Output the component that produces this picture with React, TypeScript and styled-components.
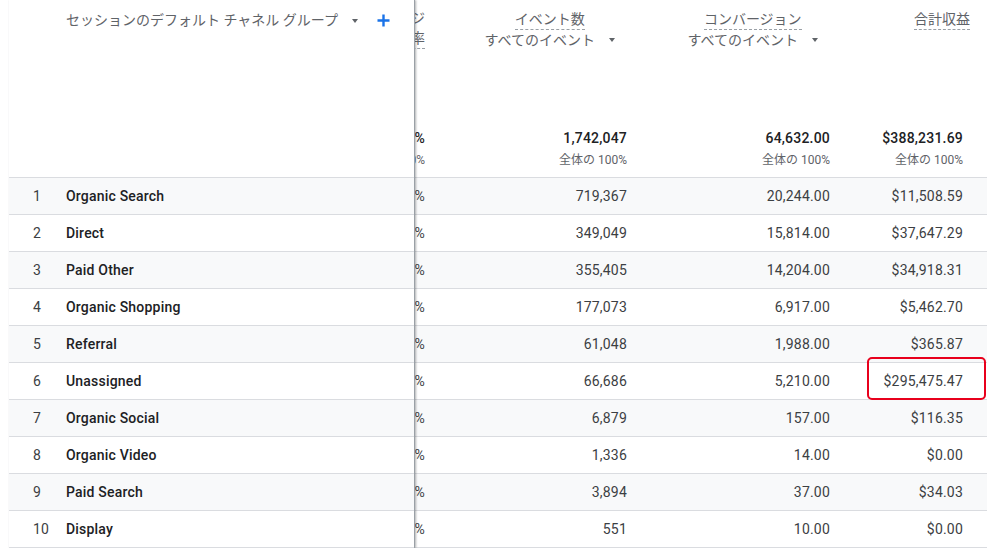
import styled, { createGlobalStyle } from "styled-components";

const GlobalStyle = createGlobalStyle`
  body {
    margin: 0;
    background: #fff;
    font-family: Roboto, "Noto Sans CJK JP", sans-serif;
    color: #202124;
  }
`;

const Page = styled.div`
  padding-left: 9px;
`;

const Table = styled.div`
  display: flex;
  width: 978px;
`;

const FixedPanel = styled.div`
  width: 406px;
  box-sizing: border-box;
  border-right: 1px solid #9aa0a6;
  box-shadow: 1px 0 2px rgba(60, 64, 67, 0.4);
  position: relative;
  z-index: 1;
  background: #fff;
`;

const ScrollPanel = styled.div`
  flex: 1;
  overflow: hidden;
`;

const FixedHeader = styled.div`
  height: 178px;
  box-sizing: border-box;
  border-bottom: 1px solid #dadce0;
  padding: 10px 0 0 57px;
  display: flex;
  align-items: flex-start;
`;

const DimLabel = styled.span`
  font-size: 14px;
  line-height: 20px;
  color: #5f6368;
  white-space: nowrap;
`;

const Caret = styled.span<{ $before: number; $after?: number }>`
  display: inline-block;
  width: 0;
  height: 0;
  border-left: 3.5px solid transparent;
  border-right: 3.5px solid transparent;
  border-top: 4px solid #5f6368;
  margin-left: ${(p) => p.$before}px;
  margin-right: ${(p) => p.$after ?? 0}px;
`;

const AddButton = styled.button`
  border: 0;
  background: none;
  padding: 0;
  margin-left: 19px;
  margin-top: 4px;
  width: 13px;
  height: 13px;
  display: flex;
  cursor: pointer;
`;

const FixedRow = styled.div<{ $striped: boolean }>`
  height: 37px;
  box-sizing: border-box;
  border-bottom: 1px solid #dadce0;
  background: ${(p) => (p.$striped ? "#f8f9fa" : "#fff")};
  display: flex;
  align-items: center;
  padding-left: 24px;
  font-size: 14px;
  letter-spacing: 0.2px;
`;

const Index = styled.span`
  width: 33px;
  color: #3c4043;
`;

const Name = styled.span`
  font-weight: 500;
  color: #202124;
`;

const GRID = "10px 215px 203px 144px";

const HeaderRow = styled.div`
  display: grid;
  grid-template-columns: ${GRID};
  height: 178px;
  box-sizing: border-box;
  border-bottom: 1px solid #dadce0;
`;

const DataRow = styled.div<{ $striped: boolean }>`
  display: grid;
  grid-template-columns: ${GRID};
  height: 37px;
  box-sizing: border-box;
  border-bottom: 1px solid #dadce0;
  background: ${(p) => (p.$striped ? "#f8f9fa" : "#fff")};
  font-size: 14px;
  letter-spacing: 0.2px;
  color: #3c4043;
`;

const ClipColumn = styled.div`
  overflow: hidden;
  display: flex;
  flex-direction: column;
  justify-content: space-between;
  padding: 8px 0 9px;
`;

const ClipLine = styled.div<{ $dashed?: boolean }>`
  display: flex;
  justify-content: flex-end;
  white-space: nowrap;
  font-size: 14px;
  line-height: 20px;
  color: #5f6368;
  span {
    border-bottom: ${(p) => (p.$dashed ? "1px dashed #9aa0a6" : "0")};
  }
`;

const MetricHeader = styled.div<{ $pad: number }>`
  display: flex;
  flex-direction: column;
  justify-content: space-between;
  align-items: flex-end;
  padding: 10px ${(p) => p.$pad}px 9px 0;
`;

const MetricTop = styled.div<{ $shift: number }>`
  display: flex;
  flex-direction: column;
  align-items: center;
  margin-right: ${(p) => p.$shift}px;
`;

const MetricTitle = styled.span`
  font-size: 14px;
  line-height: 19px;
  color: #5f6368;
  border-bottom: 1px dashed #9aa0a6;
  white-space: nowrap;
`;

const ScopeButton = styled.div`
  display: flex;
  align-items: center;
  font-size: 14px;
  line-height: 20px;
  color: #5f6368;
  white-space: nowrap;
  cursor: pointer;
`;

const Totals = styled.div`
  display: flex;
  flex-direction: column;
  align-items: flex-end;
  white-space: nowrap;
`;

const TotalValue = styled.span`
  font-size: 14px;
  line-height: 20px;
  font-weight: 500;
  letter-spacing: 0.2px;
  color: #202124;
`;

const TotalShare = styled.span`
  font-size: 12px;
  line-height: 16px;
  margin-top: 4px;
  color: #5f6368;
`;

const ClipCell = styled.div`
  overflow: hidden;
  display: flex;
  justify-content: flex-end;
  align-items: center;
  white-space: nowrap;
`;

const ValueCell = styled.div<{ $pad: number }>`
  position: relative;
  display: flex;
  justify-content: flex-end;
  align-items: center;
  padding-right: ${(p) => p.$pad}px;
  white-space: nowrap;
`;

const Highlight = styled.div`
  position: absolute;
  top: -6px;
  bottom: -1px;
  left: 24px;
  right: 1px;
  border: 2px solid #e8001c;
  border-radius: 5px;
  pointer-events: none;
`;

const PlusIcon = () => (
  <svg width="13" height="13" viewBox="0 0 13 13">
    <path d="M6.5 0.5v12M0.5 6.5h12" stroke="#1a73e8" strokeWidth="2.4" />
  </svg>
);

type Row = {
  name: string;
  rate: string;
  events: string;
  conversions: string;
  revenue: string;
  flagged?: boolean;
};

const rows: Row[] = [
  { name: "Organic Search", rate: "61.38%", events: "719,367", conversions: "20,244.00", revenue: "$11,508.59" },
  { name: "Direct", rate: "52.04%", events: "349,049", conversions: "15,814.00", revenue: "$37,647.29" },
  { name: "Paid Other", rate: "48.77%", events: "355,405", conversions: "14,204.00", revenue: "$34,918.31" },
  { name: "Organic Shopping", rate: "63.12%", events: "177,073", conversions: "6,917.00", revenue: "$5,462.70" },
  { name: "Referral", rate: "57.90%", events: "61,048", conversions: "1,988.00", revenue: "$365.87" },
  { name: "Unassigned", rate: "8.41%", events: "66,686", conversions: "5,210.00", revenue: "$295,475.47", flagged: true },
  { name: "Organic Social", rate: "44.65%", events: "6,879", conversions: "157.00", revenue: "$116.35" },
  { name: "Organic Video", rate: "55.20%", events: "1,336", conversions: "14.00", revenue: "$0.00" },
  { name: "Paid Search", rate: "66.03%", events: "3,894", conversions: "37.00", revenue: "$34.03" },
  { name: "Display", rate: "39.18%", events: "551", conversions: "10.00", revenue: "$0.00" },
];

export default function App() {
  return (
    <Page>
      <GlobalStyle />
      <Table>
        <FixedPanel>
          <FixedHeader>
            <DimLabel>セッションのデフォルト チャネル グループ</DimLabel>
            <Caret $before={14} style={{ marginTop: 9 }} />
            <AddButton aria-label="ディメンションを追加">
              <PlusIcon />
            </AddButton>
          </FixedHeader>
          {rows.map((r, i) => (
            <FixedRow key={r.name} $striped={i % 2 === 0}>
              <Index>{i + 1}</Index>
              <Name>{r.name}</Name>
            </FixedRow>
          ))}
        </FixedPanel>

        <ScrollPanel>
          <HeaderRow>
            <ClipColumn>
              <div>
                <ClipLine>
                  <span>エンゲージ</span>
                </ClipLine>
                <ClipLine $dashed>
                  <span>メント率</span>
                </ClipLine>
              </div>
              <Totals>
                <ClipLine>
                  <TotalValue>57.12%</TotalValue>
                </ClipLine>
                <ClipLine>
                  <TotalShare>全体の 100%</TotalShare>
                </ClipLine>
              </Totals>
            </ClipColumn>

            <MetricHeader $pad={13}>
              <MetricTop $shift={12}>
                <MetricTitle>イベント数</MetricTitle>
                <ScopeButton>
                  すべてのイベント
                  <Caret $before={14} />
                </ScopeButton>
              </MetricTop>
              <Totals>
                <TotalValue>1,742,047</TotalValue>
                <TotalShare>全体の 100%</TotalShare>
              </Totals>
            </MetricHeader>

            <MetricHeader $pad={13}>
              <MetricTop $shift={12}>
                <MetricTitle>コンバージョン</MetricTitle>
                <ScopeButton>
                  すべてのイベント
                  <Caret $before={14} />
                </ScopeButton>
              </MetricTop>
              <Totals>
                <TotalValue>64,632.00</TotalValue>
                <TotalShare>全体の 100%</TotalShare>
              </Totals>
            </MetricHeader>

            <MetricHeader $pad={24}>
              <MetricTop $shift={-7}>
                <MetricTitle>合計収益</MetricTitle>
              </MetricTop>
              <Totals>
                <TotalValue>$388,231.69</TotalValue>
                <TotalShare>全体の 100%</TotalShare>
              </Totals>
            </MetricHeader>
          </HeaderRow>

          {rows.map((r, i) => (
            <DataRow key={r.name} $striped={i % 2 === 0}>
              <ClipCell>{r.rate}</ClipCell>
              <ValueCell $pad={13}>{r.events}</ValueCell>
              <ValueCell $pad={13}>{r.conversions}</ValueCell>
              <ValueCell $pad={24}>
                {r.revenue}
                {r.flagged && <Highlight />}
              </ValueCell>
            </DataRow>
          ))}
        </ScrollPanel>
      </Table>
    </Page>
  );
}
